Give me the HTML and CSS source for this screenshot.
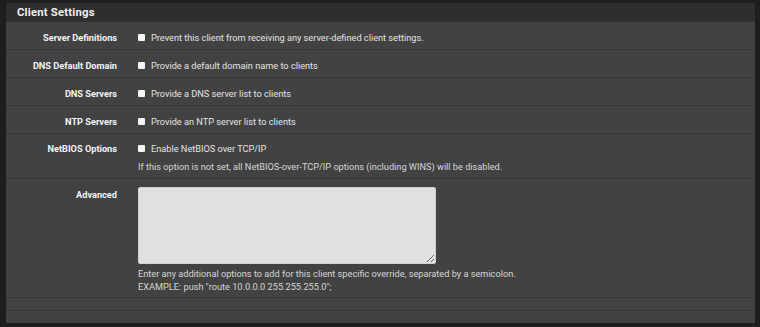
FILE: index.html
```html
<!DOCTYPE html>
<html>
<head>
<meta charset="utf-8">
<link rel="stylesheet" href="styles.css">
</head>
<body>
<div class="panel">
  <div class="panel-heading">Client Settings</div>
  <div class="panel-body">
    <div class="row">
      <div class="label">Server Definitions</div>
      <div class="field"><div class="check"><span class="box"></span>Prevent this client from receiving any server-defined client settings.</div></div>
    </div>
    <div class="row">
      <div class="label">DNS Default Domain</div>
      <div class="field"><div class="check"><span class="box"></span>Provide a default domain name to clients</div></div>
    </div>
    <div class="row">
      <div class="label">DNS Servers</div>
      <div class="field"><div class="check"><span class="box"></span>Provide a DNS server list to clients</div></div>
    </div>
    <div class="row">
      <div class="label">NTP Servers</div>
      <div class="field"><div class="check"><span class="box"></span>Provide an NTP server list to clients</div></div>
    </div>
    <div class="row row-netbios">
      <div class="label">NetBIOS Options</div>
      <div class="field">
        <div class="check"><span class="box"></span>Enable NetBIOS over TCP/IP</div>
        <div class="help">If this option is not set, all NetBIOS-over-TCP/IP options (including WINS) will be disabled.</div>
      </div>
    </div>
    <div class="row row-adv">
      <div class="label">Advanced</div>
      <div class="field">
        <textarea class="textarea"></textarea>
        <div class="help help-adv">Enter any additional options to add for this client specific override, separated by a semicolon.<br>EXAMPLE: push "route 10.0.0.0 255.255.255.0";</div>
      </div>
    </div>
    <div class="row row-empty"></div>
    <div class="row row-empty last"></div>
  </div>
</div>
</body>
</html>
```

FILE: styles.css
```css
html, body {
  margin: 0;
  padding: 0;
  background: #1e1e1e;
}
body {
  padding: 3px 5px 5px 6px;
  font-family: Roboto, "Liberation Sans", sans-serif;
  font-size: 9.2px;
  color: #e2e2e2;
}
.panel {
  background: #424242;
}
.panel-heading {
  background: #2e2e2e;
  height: 19px;
  line-height: 19px;
  padding-left: 11px;
  font-size: 11.3px;
  font-weight: 700;
  color: #eeeeee;
  letter-spacing: 0.2px;
}
.panel-body {
  display: flex;
  flex-direction: column;
}
.row {
  display: flex;
  border-bottom: 1px solid #363636;
  min-height: 27px;
}
.row.last {
  border-bottom: none;
}
.row-empty {
  min-height: 12px;
}
.label {
  width: 111px;
  flex: none;
  text-align: right;
  font-weight: 700;
  color: #f2f2f2;
  padding-top: 10px;
  line-height: 11px;
}
.field {
  padding-left: 21px;
  padding-top: 10px;
  padding-bottom: 6px;
}
.check {
  display: flex;
  align-items: center;
  line-height: 11px;
}
.box {
  width: 7px;
  height: 7px;
  background: #f4f4f4;
  border-radius: 1px;
  margin-right: 6px;
  flex: none;
}
.help {
  margin-top: 7px;
  line-height: 11px;
  color: #d6d6d6;
}
.row-netbios .label {
  padding-top: 9px;
}
.row-netbios .field {
  padding-top: 9px;
  padding-bottom: 6px;
}
.row-adv .label {
  padding-top: 10px;
}
.row-adv .field {
  padding-top: 8px;
  padding-bottom: 4px;
}
.textarea {
  display: block;
  width: 298px;
  height: 77px;
  box-sizing: border-box;
  margin: 0;
  background: #e0e0e0;
  border: 1px solid #cfcfcf;
  border-radius: 2px;
  resize: vertical;
}
.help-adv {
  margin-top: 3px;
  line-height: 13px;
}
```
